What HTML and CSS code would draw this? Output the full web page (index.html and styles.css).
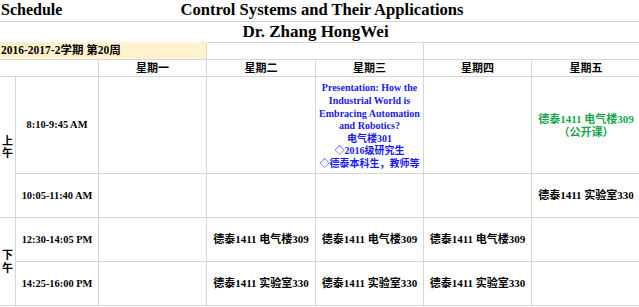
FILE: index.html
```html
<!DOCTYPE html>
<html>
<head>
<meta charset="utf-8">
<link rel="stylesheet" href="styles.css">
</head>
<body>
<table class="sheet">
  <colgroup>
    <col class="c-half"><col class="c-time"><col class="c-day"><col class="c-day2"><col class="c-day"><col class="c-day"><col class="c-last">
  </colgroup>
  <tr class="r-title">
    <td colspan="2" class="schedule">Schedule</td>
    <td colspan="5" class="course">Control Systems and Their Applications</td>
  </tr>
  <tr class="r-teacher">
    <td colspan="7" class="teacher">Dr. Zhang HongWei</td>
  </tr>
  <tr class="r-term">
    <td colspan="3" class="term">2016-2017-2学期 第20周</td>
    <td colspan="2" class="vr"></td>
    <td colspan="2"></td>
  </tr>
  <tr class="r-head">
    <td colspan="2" class="vr"></td>
    <td class="vr day">星期一</td>
    <td class="vr day">星期二</td>
    <td class="vr day">星期三</td>
    <td class="vr day">星期四</td>
    <td class="day">星期五</td>
  </tr>
  <tr class="r-big">
    <td rowspan="2" class="vr half"><span>上</span><span>午</span></td>
    <td class="vr time">8:10-9:45 AM</td>
    <td class="vr"></td>
    <td class="vr"></td>
    <td class="vr talk">Presentation: How the Industrial World is Embracing Automation and Robotics?<br>电气楼301<br>◇2016级研究生<br>◇德泰本科生，教师等</td>
    <td class="vr"></td>
    <td class="open">德泰1411 电气楼309<br>（公开课）</td>
  </tr>
  <tr class="r-slot">
    <td class="vr time">10:05-11:40 AM</td>
    <td class="vr"></td>
    <td class="vr"></td>
    <td class="vr"></td>
    <td class="vr"></td>
    <td class="cls">德泰1411 实验室330</td>
  </tr>
  <tr class="r-slot">
    <td rowspan="2" class="vr half"><span>下</span><span>午</span></td>
    <td class="vr time">12:30-14:05 PM</td>
    <td class="vr"></td>
    <td class="vr cls">德泰1411 电气楼309</td>
    <td class="vr cls">德泰1411 电气楼309</td>
    <td class="vr cls">德泰1411 电气楼309</td>
    <td></td>
  </tr>
  <tr class="r-slot">
    <td class="vr time">14:25-16:00 PM</td>
    <td class="vr"></td>
    <td class="vr cls">德泰1411 实验室330</td>
    <td class="vr cls">德泰1411 实验室330</td>
    <td class="vr cls">德泰1411 实验室330</td>
    <td></td>
  </tr>
</table>
</body>
</html>
```
FILE: styles.css
```css
html, body {
  margin: 0;
  padding: 0;
  background: #ffffff;
}
.sheet {
  border-collapse: separate;
  border-spacing: 0;
  table-layout: fixed;
  width: 640px;
  font-family: "Liberation Serif", "Noto Sans CJK SC", serif;
  font-weight: bold;
  font-size: 11px;
  color: #000;
}
.c-half { width: 16px; }
.c-time { width: 83px; }
.c-day { width: 108px; }
.c-day2 { width: 109px; }
.c-last { width: 108px; }
.sheet td {
  padding: 0;
  border-bottom: 1px solid #d6d6d6;
  text-align: center;
  vertical-align: middle;
  white-space: nowrap;
  overflow: visible;
  line-height: 1.15;
}
.sheet td.vr { border-right: 1px solid #d6d6d6; }
.r-title { height: 22px; }
.r-teacher { height: 21px; }
.r-term { height: 17px; }
.r-head { height: 17px; }
.r-big { height: 97px; }
.r-slot { height: 44px; }
.schedule {
  font-size: 16px;
  text-align: left !important;
  padding-left: 1px !important;
  vertical-align: top !important;
  line-height: 19px !important;
}
.course {
  font-size: 16.6px;
  vertical-align: top !important;
  line-height: 19px !important;
  padding-right: 95px !important;
}
.teacher {
  font-size: 17px;
  padding-right: 9px !important;
}
.term {
  background: #fff2cc;
  text-align: left !important;
  padding-left: 1px !important;
  border-right: 1px solid #d6d6d6;
  box-shadow: 0 -1px 0 #fff2cc;
  font-size: 11.5px;
}
.time { font-size: 10.4px; }
.half span {
  display: block;
  line-height: 12.5px;
}
.talk {
  color: #1a1af0;
  font-size: 10px;
  white-space: normal !important;
  line-height: 12.6px !important;
  padding-top: 3px !important;
}
.open {
  color: #14a64e;
  line-height: 13px !important;
  padding-top: 2px !important;
}
```
